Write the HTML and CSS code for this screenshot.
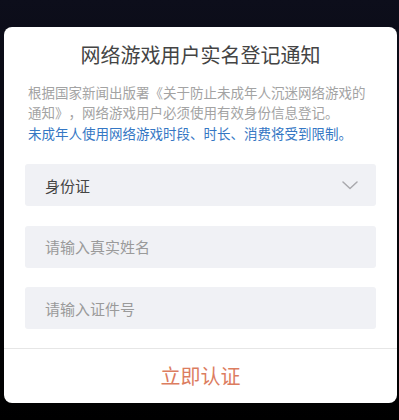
FILE: index.html
```html
<!DOCTYPE html>
<html lang="zh-CN">
<head>
<meta charset="utf-8">
<title>网络游戏用户实名登记通知</title>
<link rel="stylesheet" href="styles.css">
</head>
<body>
<div class="screen">
  <div class="modal">
    <h1 class="title">网络游戏用户实名登记通知</h1>
    <div class="notice">
      <p class="notice-text">根据国家新闻出版署《关于防止未成年人沉迷网络游戏的通知》，网络游戏用户必须使用有效身份信息登记。</p>
      <p class="notice-warn">未成年人使用网络游戏时段、时长、消费将受到限制。</p>
    </div>
    <div class="form">
      <div class="field select">
        <span class="value">身份证</span>
        <svg class="chevron" width="16" height="9" viewBox="0 0 16 9"><path d="M1 1 L8 7.5 L15 1" fill="none" stroke="#a9a9ad" stroke-width="1.5" stroke-linecap="round" stroke-linejoin="round"/></svg>
      </div>
      <div class="field"><span class="placeholder">请输入真实姓名</span></div>
      <div class="field"><span class="placeholder">请输入证件号</span></div>
    </div>
    <div class="actions">
      <button class="submit">立即认证</button>
    </div>
  </div>
</div>
</body>
</html>
```

FILE: styles.css
```css
html, body {
  margin: 0;
  padding: 0;
}
body {
  width: 399px;
  height: 420px;
  overflow: hidden;
  background: linear-gradient(#0d0e1b 0%, #06060c 50%, #000 100%);
  font-family: "Noto Sans CJK SC", "Noto Sans", sans-serif;
  text-spacing-trim: space-all;
}
.screen {
  padding: 27px 2px 0 4px;
}
.modal {
  width: 393px;
  height: 376px;
  background: #fff;
  border-radius: 8px;
  display: flex;
  flex-direction: column;
  overflow: hidden;
}
.title {
  margin: 14px 0 0;
  font-size: 20px;
  line-height: 28px;
  font-weight: 400;
  color: #444;
  text-align: center;
}
.notice {
  padding: 0 24px;
  margin-top: 13px;
}
.notice p {
  margin: 0;
  font-size: 13.5px;
  line-height: 20px;
}
.notice-text {
  color: #a3a3a3;
}
.notice-warn {
  color: #3577c4;
  margin-top: 1px !important;
}
.form {
  padding: 0 21px;
  margin-top: 21px;
  display: flex;
  flex-direction: column;
  gap: 19.5px;
}
.field {
  height: 42px;
  background: #f0f1f5;
  border-radius: 3px;
  display: flex;
  align-items: center;
  justify-content: space-between;
  padding: 0 18px 0 20px;
  font-size: 15px;
}
.value {
  color: #444;
}
.placeholder {
  color: #9a9a9a;
}
.chevron {
  display: block;
}
.actions {
  margin-top: 19px;
  border-top: 1px solid #e6e6e6;
  flex: 1;
  display: flex;
  align-items: center;
  justify-content: center;
}
.submit {
  border: 0;
  background: none;
  padding: 0;
  font-family: inherit;
  font-size: 20px;
  line-height: 28px;
  color: #dc7d5f;
}
```
